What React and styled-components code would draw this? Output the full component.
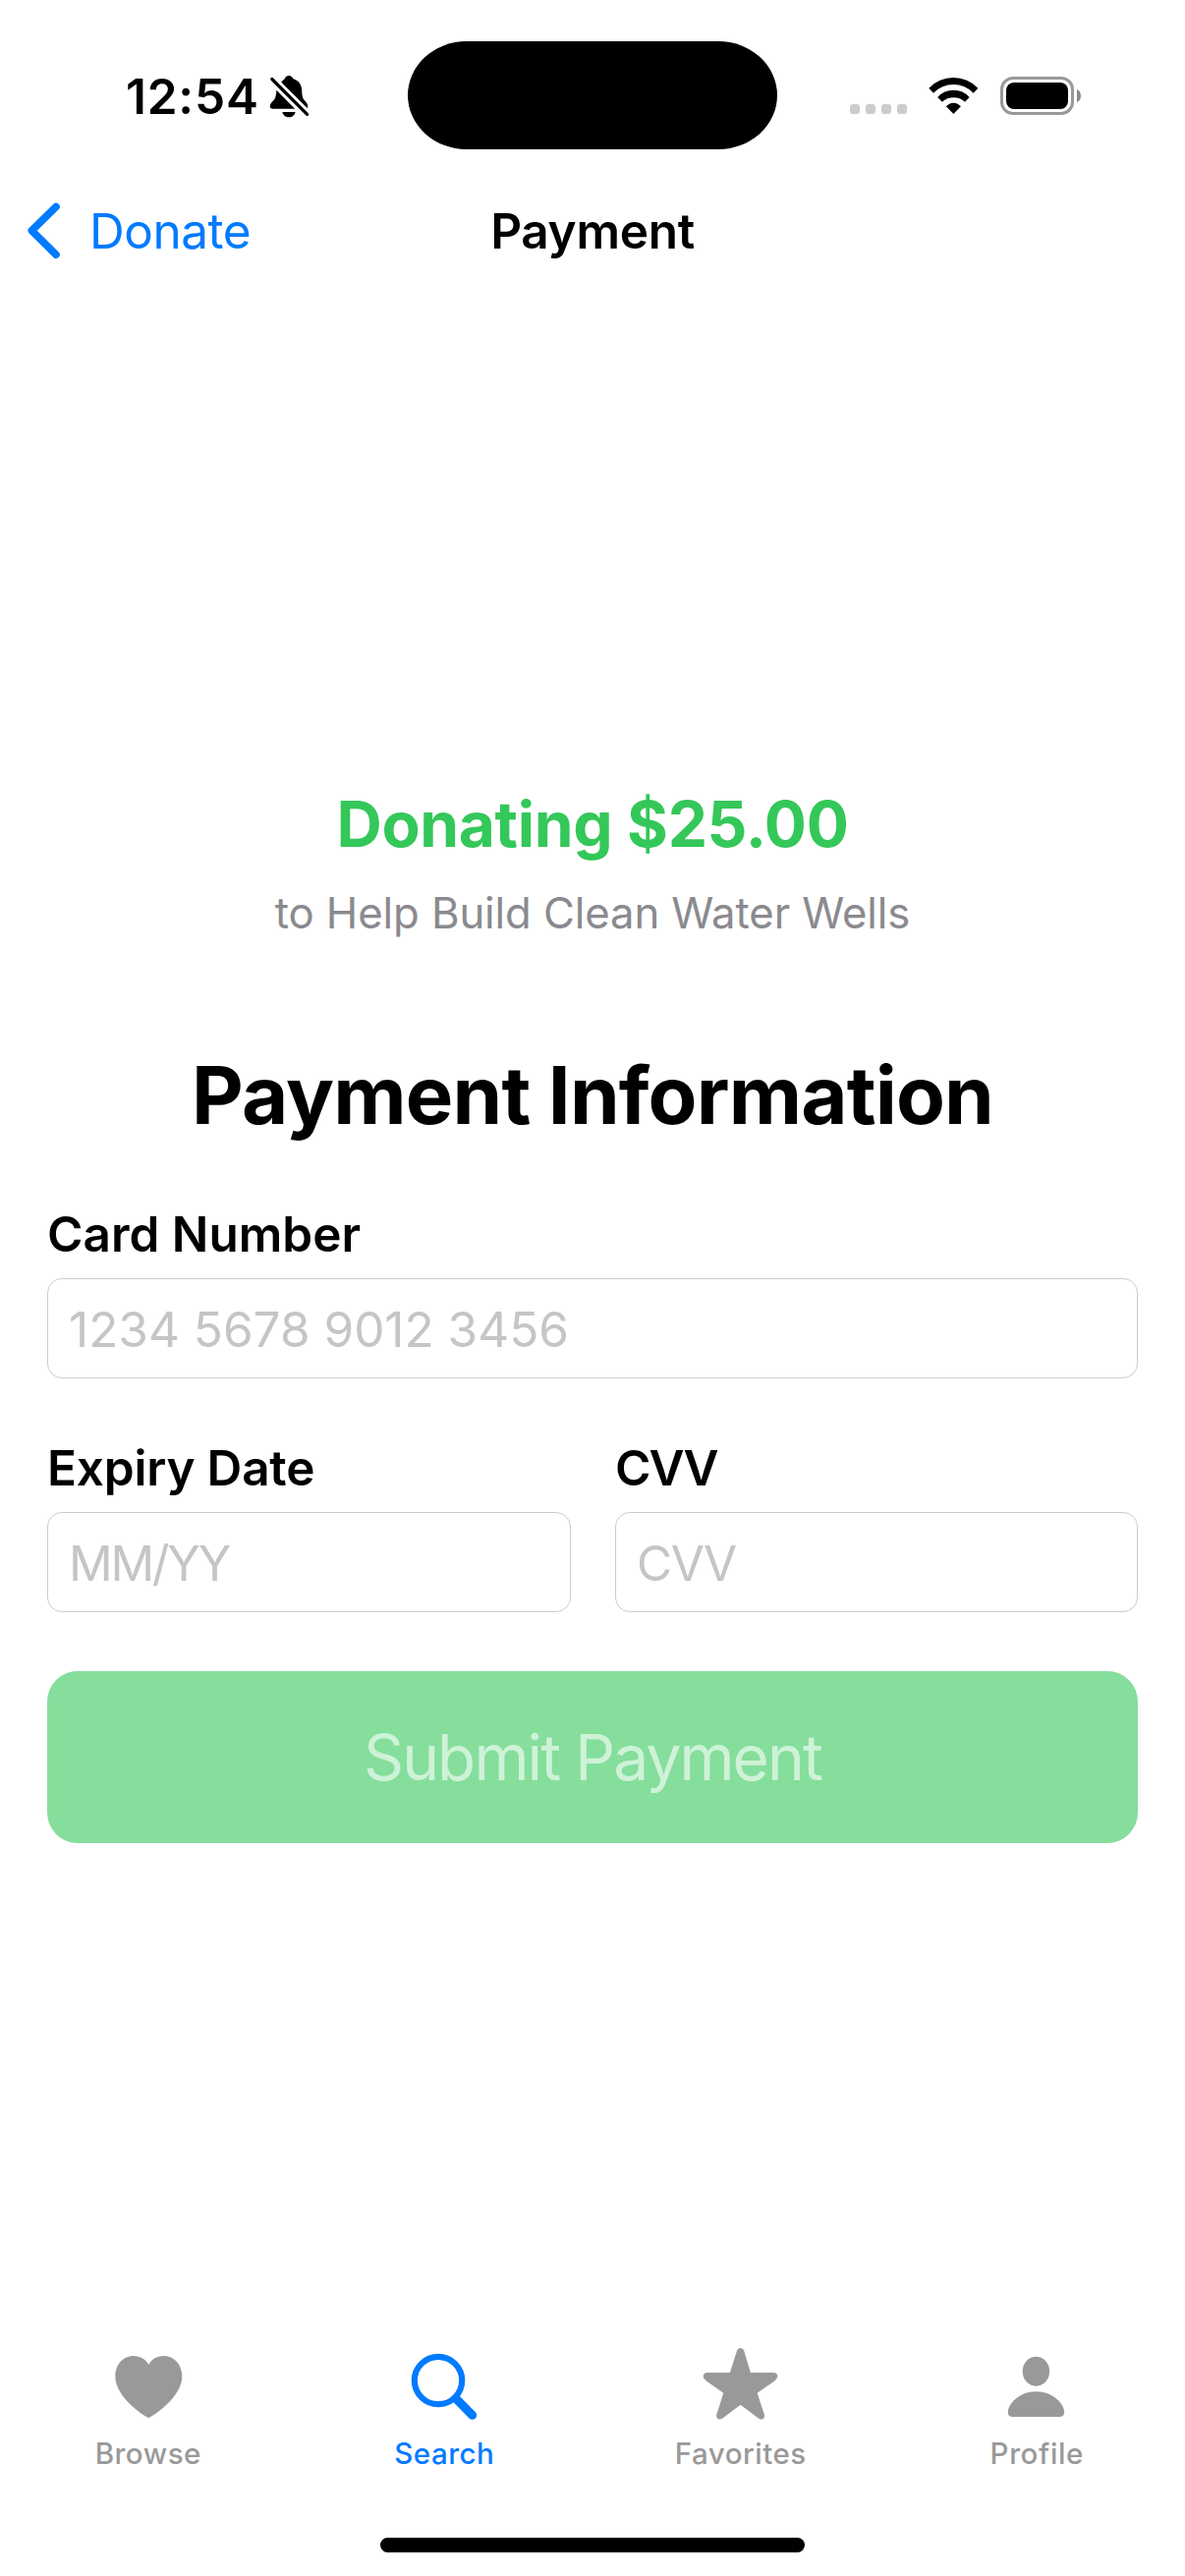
import React from "react";
import styled, { createGlobalStyle } from "styled-components";

const blue = "#007aff";
const green = "#34c759";
const inactive = "#999999";

const GlobalStyle = createGlobalStyle`
  * { box-sizing: border-box; }
  body { margin: 0; background: #fff; }
  body, input, button { font-family: Inter, "Liberation Sans", sans-serif; }
`;

const Screen = styled.div`
  width: 1206px;
  height: 2622px;
  display: flex;
  flex-direction: column;
  background: #fff;
  color: #000;
  overflow: hidden;
`;

const StatusBar = styled.div`
  height: 196px;
  display: grid;
  grid-template-columns: 415px 376px 415px;
  align-items: center;
`;

const StatusLeft = styled.div`
  display: flex;
  align-items: center;
  padding-left: 128px;
`;

const Time = styled.span`
  width: 145px;
  font-size: 49.5px;
  line-height: 60px;
  font-weight: 600;
  letter-spacing: ${(p) => p.$track}px;
  white-space: nowrap;
`;

const BellIcon = styled.svg`
  width: 44px;
  height: 45px;
  margin-top: 1px;
`;

const Island = styled.div`
  height: 110px;
  margin-bottom: 2px;
  border-radius: 60px / 55px;
  background: #000;
`;

const StatusRight = styled.div`
  display: flex;
  align-items: center;
  padding-left: 74px;
`;

const SignalDots = styled.div`
  height: 36px;
  display: flex;
  align-items: flex-end;
  gap: 6px;
`;

const Dot = styled.span`
  width: 10px;
  height: 10px;
  border-radius: 3px;
  background: #ccc;
`;

const WifiIcon = styled.svg`
  width: 54px;
  height: 40px;
  margin-left: 21px;
`;

const BatteryIcon = styled.svg`
  width: 83px;
  height: 39px;
  margin: 0 0 1px 20px;
`;

const NavBar = styled.header`
  height: 78px;
  display: grid;
  grid-template-columns: 1fr auto 1fr;
  align-items: center;
  padding: 0 28px;
`;

const BackButton = styled.a`
  display: flex;
  align-items: center;
  gap: 29px;
  color: ${blue};
  font-size: 49.5px;
  line-height: 60px;
  letter-spacing: ${(p) => p.$track}px;
`;

const Chevron = styled.svg`
  width: 34px;
  height: 60px;
`;

const NavTitle = styled.span`
  font-size: 49.5px;
  line-height: 60px;
  font-weight: 600;
  letter-spacing: ${(p) => p.$track}px;
`;

const Main = styled.main`
  flex: 1;
  display: flex;
  flex-direction: column;
  padding: 525px 48px 0;
`;

const Amount = styled.div`
  text-align: center;
  font-size: 64px;
  line-height: 80px;
  font-weight: 700;
  letter-spacing: ${(p) => p.$track}px;
  color: ${green};
`;

const Cause = styled.div`
  margin-top: 20px;
  text-align: center;
  font-size: 43.7px;
  line-height: 61px;
  letter-spacing: ${(p) => p.$track}px;
  color: #8a8a8e;
`;

const Heading = styled.h1`
  margin: 104px 0 61px;
  text-align: center;
  font-size: 81.5px;
  line-height: 101px;
  font-weight: 700;
  letter-spacing: ${(p) => p.$track}px;
`;

const Form = styled.form`
  display: flex;
  flex-direction: column;
`;

const FieldRow = styled.div`
  display: grid;
  grid-template-columns: 533px 532px;
  column-gap: 45px;
  margin-top: 61px;
`;

const Field = styled.label`
  display: flex;
  flex-direction: column;
  gap: 15px;
`;

const FieldLabel = styled.span`
  font-size: 49.5px;
  line-height: 60px;
  font-weight: 600;
  letter-spacing: ${(p) => p.$track}px;
`;

const TextInput = styled.input`
  width: 100%;
  height: 102px;
  padding: 2px 21px 0;
  border: 1px solid #cccccd;
  border-radius: 15px;
  outline: none;
  background: #fff;
  color: #000;
  font-size: 49.5px;
  letter-spacing: ${(p) => p.$track}px;
  &::placeholder { color: #c5c5c7; opacity: 1; }
`;

const SubmitButton = styled.button`
  height: 175px;
  margin-top: 60px;
  padding: 0;
  border: 0;
  border-radius: 31px;
  background: #85de9c;
  color: #cef2d7;
  font-size: 64px;
  letter-spacing: ${(p) => p.$track}px;
`;

const TabBar = styled.nav`
  display: grid;
  grid-template-columns: repeat(4, 1fr);
`;

const Tab = styled.a`
  display: flex;
  flex-direction: column;
  align-items: center;
  gap: 4px;
  color: ${(p) => (p.$active ? blue : inactive)};
`;

const TabIcon = styled.svg`
  width: 90px;
  height: 90px;
`;

const TabLabel = styled.span`
  font-size: 29.5px;
  line-height: 39px;
  font-weight: 500;
  letter-spacing: ${(p) => p.$track}px;
`;

const HomeIndicator = styled.div`
  align-self: center;
  width: 432px;
  height: 15px;
  margin: 66px 0 24px;
  border-radius: 8px;
  background: #000;
`;

const tabs = [
  {
    label: "Browse",
    track: 0.5,
    icon: (
      <path
        fill="currentColor"
        d="M45.3 77C43.5 77 11.3 57 11.3 35C11.3 23 19 14 30 14C37 14 42.5 17.5 45.3 23C48 17.5 53.5 14 60.5 14C71.5 14 79.3 23 79.3 35C79.3 57 47 77 45.3 77Z"
      />
    ),
  },
  {
    label: "Search",
    track: 0.5,
    active: true,
    icon: (
      <g fill="none" stroke="currentColor" strokeLinecap="round">
        <circle cx="39" cy="39" r="24.2" strokeWidth="6.2" />
        <path d="M57.5 57.8L73.7 74.3" strokeWidth="9" />
      </g>
    ),
  },
  {
    label: "Favorites",
    track: 0.5,
    icon: (
      <path
        fill="currentColor"
        d="M40.9 9Q42 6 44.6 6Q47.2 6 48.3 9L54.9 31H78Q82.3 31.2 82.3 35Q82 37.5 79 39.7L61.6 51.7L69 74Q69.6 77 67 78.5Q65 79 62.5 77.3L44.6 63.7L26.7 77.3Q24 79 22.2 78.5Q19.6 77 20.2 74L27.3 51.7L10.2 39.7Q6.8 37.5 6.6 35Q6.9 31 11 31H33.9Z"
      />
    ),
  },
  {
    label: "Profile",
    track: 0.6,
    icon: (
      <g fill="currentColor">
        <ellipse cx="44.4" cy="29.7" rx="13.7" ry="15" />
        <path d="M20.5 76C17.5 76 15.8 74.3 15.8 71.5C15.8 63 27 50.3 44.4 50.3C62 50.3 73.1 63 73.1 71.5C73.1 74.3 71.3 76 68.3 76Z" />
      </g>
    ),
  },
];

export default function App() {
  return (
    <Screen>
      <GlobalStyle />
      <StatusBar>
        <StatusLeft>
          <Time $track={0.8}>12:54</Time>
          <BellIcon viewBox="0 0 44 45">
            <path d="M13.3 7.7C14.5 6 15.8 5.4 16.5 4.6C17.2 2.4 18.8 1 21 1C23.2 1 24.8 2.4 25.5 4.2C31 6 34 10 34.2 16C34.3 21 34.8 23.5 36.5 25.8C38.5 28 40 29.5 40.2 31.3C40.3 32.6 40 33.4 39.6 33.9Z" />
            <path d="M8.4 15.7L27.2 34.7H4.4C2.8 34.7 1.7 33.5 1.7 31.7C1.9 29.5 4 27.8 5.5 26C7.5 23.6 8 21 8.4 15.7Z" />
            <path d="M14.3 38H27.6C27 41 24.5 43.3 21 43.3C17.5 43.3 15 41 14.3 38Z" />
            <path d="M3.8 4.5L39.6 40.4" fill="none" stroke="#000" strokeWidth="3.2" strokeLinecap="round" />
          </BellIcon>
        </StatusLeft>
        <Island />
        <StatusRight>
          <SignalDots>
            <Dot />
            <Dot />
            <Dot />
            <Dot />
          </SignalDots>
          <WifiIcon viewBox="0 0 54 40">
            <path d="M1.3 11.7A34.5 34.5 0 0 1 51.3 11.7L46.7 16.7A28.2 28.2 0 0 0 6 16.7Z" />
            <path d="M10.2 21A21.6 21.6 0 0 1 42.6 21L38 25.7A17.2 17.2 0 0 0 14.9 25.7Z" />
            <path d="M18.9 30.3A9.6 9.6 0 0 1 33.9 30.3L26.4 38Z" />
          </WifiIcon>
          <BatteryIcon viewBox="0 0 83 39">
            <rect x="1.5" y="1.5" width="72" height="36" rx="11.5" fill="none" stroke="#999" strokeWidth="3" />
            <rect x="6" y="6" width="63" height="27" rx="8" />
            <path d="M78 13C83.3 15 83.3 24 78 26Z" fill="#888" />
          </BatteryIcon>
        </StatusRight>
      </StatusBar>

      <NavBar>
        <BackButton $track={-0.5}>
          <Chevron viewBox="0 0 34 60">
            <path d="M29 5.5L4.3 29.8L29 54.2" fill="none" stroke="currentColor" strokeWidth="7.6" strokeLinecap="round" strokeLinejoin="round" />
          </Chevron>
          Donate
        </BackButton>
        <NavTitle $track={-0.3}>Payment</NavTitle>
      </NavBar>

      <Main>
        <Amount $track={-0.35}>Donating $25.00</Amount>
        <Cause $track={-0.1}>to Help Build Clean Water Wells</Cause>
        <Heading $track={-0.85}>Payment Information</Heading>
        <Form>
          <Field>
            <FieldLabel $track={0}>Card Number</FieldLabel>
            <TextInput $track={0} placeholder="1234 5678 9012 3456" />
          </Field>
          <FieldRow>
            <Field>
              <FieldLabel $track={-0.2}>Expiry Date</FieldLabel>
              <TextInput $track={-2.3} placeholder="MM/YY" />
            </Field>
            <Field>
              <FieldLabel $track={-1.9}>CVV</FieldLabel>
              <TextInput $track={-1.5} placeholder="CVV" />
            </Field>
          </FieldRow>
          <SubmitButton type="button" disabled $track={-1.9}>
            Submit Payment
          </SubmitButton>
        </Form>
      </Main>

      <TabBar>
        {tabs.map((tab) => (
          <Tab key={tab.label} $active={tab.active}>
            <TabIcon viewBox="0 0 90 90">{tab.icon}</TabIcon>
            <TabLabel $track={tab.track}>{tab.label}</TabLabel>
          </Tab>
        ))}
      </TabBar>
      <HomeIndicator />
    </Screen>
  );
}
